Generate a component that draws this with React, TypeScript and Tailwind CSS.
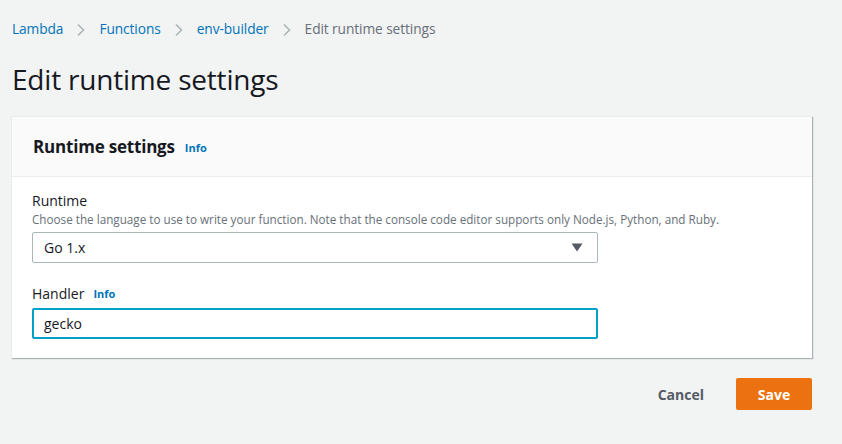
import React from 'react';

function Chevron() {
  return (
    <svg width="10" height="14" viewBox="0 0 10 14" className="mx-[13px]">
      <path d="M2 1.5 L7.5 7 L2 12.5" fill="none" stroke="#aab7b8" strokeWidth="1.6" />
    </svg>
  );
}

export default function App() {
  return (
    <main
      className="w-[842px] h-[444px] bg-[#f2f3f3] overflow-hidden text-[#16191f]"
      style={{ fontFamily: '"Open Sans", "Noto Sans", sans-serif' }}
    >
      {/* Breadcrumbs */}
      <nav className="flex items-center pl-3 pt-[19px] h-[40px] text-[13.75px] tracking-[-0.1px]">
        <span className="text-[#0073bb]">Lambda</span>
        <Chevron />
        <span className="text-[#0073bb]">Functions</span>
        <Chevron />
        <span className="text-[#0073bb]">env-builder</span>
        <Chevron />
        <span className="text-[#687078]">Edit runtime settings</span>
      </nav>

      <h1 className="pl-3 mt-[21px] text-[28px] leading-[36px] font-normal tracking-[-0.2px]">Edit runtime settings</h1>

      {/* Card */}
      <section className="mt-[19px] ml-[11px] w-[801px] bg-white border-t border-l border-[#eaeded] shadow-[1px_1px_1px_0_rgba(0,28,36,0.3)]">
        <header className="h-[60px] bg-[#fafafa] border-b border-[#eaeded] flex items-center pl-[21px]">
          <h2 className="text-[17px] font-bold tracking-[-0.2px]">Runtime settings</h2>
          <span className="ml-[10px] mt-[3px] text-[11px] font-bold text-[#0073bb]">Info</span>
        </header>

        <div className="px-[20px] pt-[14px] pb-[19px]">
          <div className="text-[14px] leading-[20px]">Runtime</div>
          <div className="text-[11.7px] leading-[16px] text-[#687078]">
            Choose the language to use to write your function. Note that the console code editor supports only Node.js, Python, and Ruby.
          </div>
          <div className="mt-[5px] w-[566px] h-[31px] border border-[#aab7b8] rounded-[2px] flex items-center justify-between pl-[11px] pr-[14px] text-[14px]">
            <span>Go 1.x</span>
            <svg width="12" height="9" viewBox="0 0 12 9">
              <path d="M0.5 0.5 H11.5 L6 8.5 Z" fill="#545b64" />
            </svg>
          </div>

          <div className="mt-[21px] flex items-center text-[14px] leading-[20px]">
            Handler
            <span className="ml-[9px] text-[11px] font-bold text-[#0073bb]">Info</span>
          </div>
          <div className="mt-[4px] w-[566px] h-[31px] border-2 border-[#00a1c9] rounded-[2px] flex items-center pl-[10px] text-[14px]">
            gecko
          </div>
        </div>
      </section>

      {/* Actions */}
      <div className="flex justify-end items-center w-[812px] mt-[20px] gap-[32px]">
        <button className="text-[14px] font-bold text-[#545b64]">Cancel</button>
        <button className="w-[76px] h-[32px] rounded-[2px] bg-[#ec7211] text-white text-[14px] font-bold">Save</button>
      </div>
    </main>
  );
}
